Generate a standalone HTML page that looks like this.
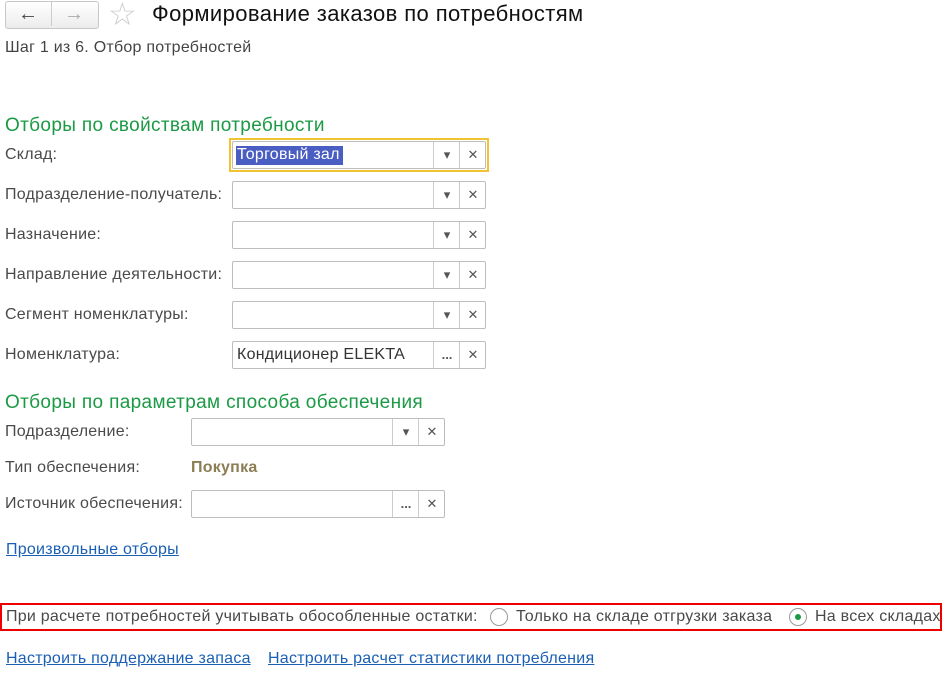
<!DOCTYPE html>
<html><head><meta charset="utf-8"><style>
body{margin:0;width:946px;height:675px;background:#fff;font-family:"Liberation Sans",sans-serif;position:relative;overflow:hidden;color:#444}
.a{position:absolute;white-space:nowrap}
.lbl{font-size:16px;letter-spacing:0.25px;color:#4a4a4a}
.h{font-size:19px;letter-spacing:0.35px;color:#1a9a44}
.f{position:absolute;height:28px;border:1px solid #bdbdbd;border-radius:2px;background:#fff;box-sizing:border-box}
.f .b{position:absolute;top:0;width:26px;height:26px;border-left:1px solid #ccc;text-align:center;line-height:26px;font-size:13px;color:#555}
.lnk{font-size:16px;letter-spacing:0.25px;color:#1a5fb4;text-decoration:underline}
.rad{position:absolute;width:18px;height:18px;border:1px solid #999;border-radius:50%;box-sizing:border-box;background:#fff}
</style></head><body>
<div class="a" style="left:5px;top:1px;width:92px;height:26px;border:1px solid #c8c8c8;border-radius:3px;background:linear-gradient(#fff,#ececec)"></div>
<div class="a" style="left:51px;top:2px;width:1px;height:24px;background:#ccc"></div>
<div class="a" style="left:18px;top:1px;font-size:20px;color:#444;line-height:26px">&#x2190;</div>
<div class="a" style="left:64px;top:1px;font-size:20px;color:#aaa;line-height:26px">&#x2192;</div>
<div class="a" style="left:108px;top:-3px;font-size:32px;color:#ccc;line-height:34px">☆</div>
<div class="a" style="left:152px;top:1px;font-size:22px;letter-spacing:0.4px;color:#111">Формирование заказов по потребностям</div>
<div class="a" style="left:5px;top:39px;font-size:16px;letter-spacing:0.25px;color:#444">Шаг 1 из 6. Отбор потребностей</div>

<div class="a h" style="left:5px;top:115px">Отборы по свойствам потребности</div>
<div class="a lbl" style="left:5px;top:146px">Склад:</div>
<div class="a" style="left:229px;top:138px;width:260px;height:34px;border:2px solid #f1c232;box-sizing:border-box"></div>
<div class="f" style="left:232px;top:141px;width:254px"><div class="a" style="left:3px;top:4px;background:#4a5dc2;color:#fff;font-size:16px;letter-spacing:0.25px;padding:0 3px 1px 1px">Торговый зал</div><div class="b" style="left:200px">▾</div><div class="b" style="left:226px">✕</div></div>

<div class="a lbl" style="left:5px;top:186px">Подразделение-получатель:</div>
<div class="f" style="left:232px;top:181px;width:254px"><div class="b" style="left:200px">▾</div><div class="b" style="left:226px">✕</div></div>
<div class="a lbl" style="left:5px;top:226px">Назначение:</div>
<div class="f" style="left:232px;top:221px;width:254px"><div class="b" style="left:200px">▾</div><div class="b" style="left:226px">✕</div></div>
<div class="a lbl" style="left:5px;top:266px">Направление деятельности:</div>
<div class="f" style="left:232px;top:261px;width:254px"><div class="b" style="left:200px">▾</div><div class="b" style="left:226px">✕</div></div>
<div class="a lbl" style="left:5px;top:306px">Сегмент номенклатуры:</div>
<div class="f" style="left:232px;top:301px;width:254px"><div class="b" style="left:200px">▾</div><div class="b" style="left:226px">✕</div></div>
<div class="a lbl" style="left:5px;top:346px">Номенклатура:</div>
<div class="f" style="left:232px;top:341px;width:254px"><div class="a" style="left:4px;top:4px;font-size:16px;letter-spacing:0.25px;color:#333">Кондиционер ELEKTA</div><div class="b" style="left:200px;font-weight:bold">...</div><div class="b" style="left:226px">✕</div></div>

<div class="a h" style="left:5px;top:392px">Отборы по параметрам способа обеспечения</div>
<div class="a lbl" style="left:5px;top:423px">Подразделение:</div>
<div class="f" style="left:191px;top:418px;width:254px"><div class="b" style="left:200px">▾</div><div class="b" style="left:226px">✕</div></div>
<div class="a lbl" style="left:5px;top:459px">Тип обеспечения:</div>
<div class="a" style="left:191px;top:459px;font-size:16px;letter-spacing:0.25px;font-weight:bold;color:#8c7d55">Покупка</div>
<div class="a lbl" style="left:5px;top:495px">Источник обеспечения:</div>
<div class="f" style="left:191px;top:490px;width:254px"><div class="b" style="left:200px;font-weight:bold">...</div><div class="b" style="left:226px">✕</div></div>

<div class="a lnk" style="left:6px;top:541px">Произвольные отборы</div>

<div class="a" style="left:0;top:603px;width:942px;height:28px;border:2px solid #e00;box-sizing:border-box"></div>
<div class="a lbl" style="left:6px;top:608px">При расчете потребностей учитывать обособленные остатки:</div>
<div class="rad" style="left:490px;top:608px"></div>
<div class="a lbl" style="left:516px;top:608px">Только на складе отгрузки заказа</div>
<div class="rad" style="left:789px;top:608px"><div class="a" style="left:5px;top:5px;width:6px;height:6px;border-radius:50%;background:#1a9a44"></div></div>
<div class="a lbl" style="left:815px;top:608px">На всех складах</div>

<div class="a lnk" style="left:6px;top:650px">Настроить поддержание запаса</div>
<div class="a lnk" style="left:268px;top:650px">Настроить расчет статистики потребления</div>
</body></html>
